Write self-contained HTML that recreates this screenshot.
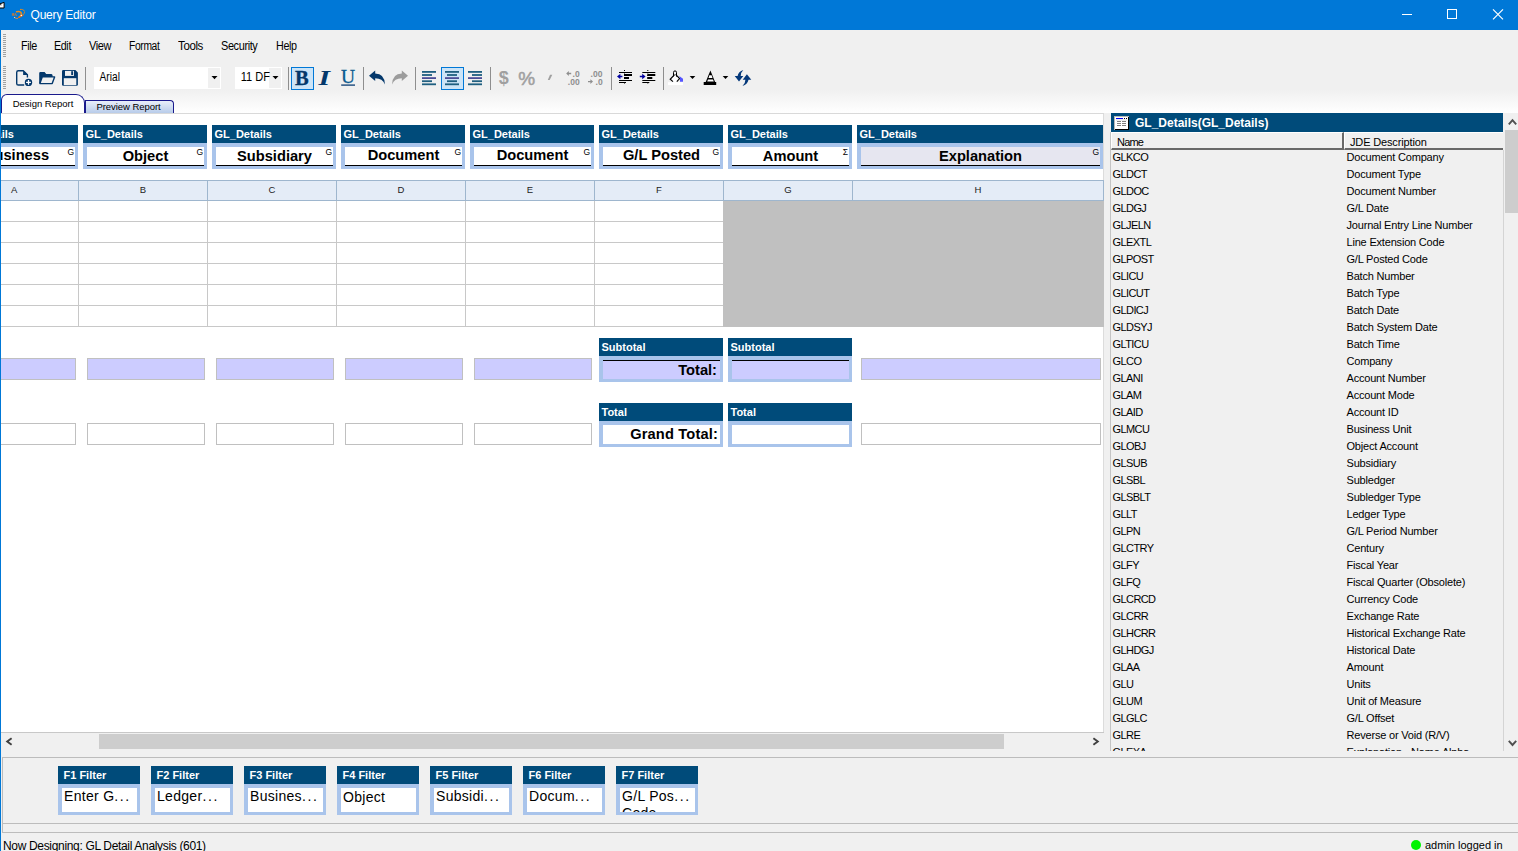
<!DOCTYPE html>
<html><head><meta charset="utf-8"><title>Query Editor</title>
<style>
*{box-sizing:border-box;margin:0;padding:0}
html,body{width:1518px;height:851px;overflow:hidden;background:#f0f0f0;font-family:"Liberation Sans",sans-serif;font-size:12px;color:#000}
.a{position:absolute}
#title{left:0;top:0;width:1518px;height:30px;background:#0078d7;color:#fff}
#title .t{left:30.5px;top:8px;font-size:12px;letter-spacing:-0.2px}
.menu{top:39px;font-size:12px}
.blk{background:#004b7a}
.blk .hd{left:2.5px;top:3px;color:#fff;font-weight:bold;font-size:11px;white-space:nowrap}
.blk .bx{left:0;top:18px;right:0;bottom:0;background:#a9c4eb}
.blk .in{left:4px;top:4px;right:3px;bottom:3px;background:#fff;border-bottom:1px solid #000;overflow:hidden}
.blk .lb{left:0;right:0;top:0px;text-align:center;font-weight:bold;font-size:14.67px;line-height:18px;white-space:nowrap}
.blk .g{right:1px;top:0px;font-size:8.5px}
.lav{background:#ccccff;border:1px solid #c0c0c0;height:22px;top:358px}
.wht{background:#fff;border:1px solid #c0c0c0;height:22px;top:423px}
.ch{top:180px;height:21px;background:#e4ecf7;border:1px solid #9eb6ce;border-left:none;font-size:9.5px;text-align:center;line-height:17px;color:#222}
.lst{font-size:11px;white-space:nowrap;line-height:17px;letter-spacing:-0.58px}
.lsd{letter-spacing:-0.19px}
.fl{background:#004b7a;width:82px;height:49px;top:766px}
.fl .hd{left:5.5px;top:3px;color:#fff;font-weight:bold;font-size:11px;white-space:nowrap}
.fl .bx{left:0;top:18px;right:0;bottom:0;background:#a9c4eb}
.fl .in{left:4px;top:4px;right:3px;bottom:3px;background:#fff;overflow:hidden;font-size:14px;line-height:17px;padding-left:2px;white-space:nowrap;letter-spacing:0.3px}
</style></head><body>

<div class="a" id="title"><div class="a t">Query Editor</div>
<svg class="a" style="left:10px;top:7px" width="18" height="14" viewBox="10 7 18 14"><g fill="none" stroke-linecap="round"><path d="M16.6 11.8Q20.8 11 21.4 13.6Q21.6 15.8 19 17.3" stroke="#f58a10" stroke-width="1.5"/><path d="M18.8 17.4L22.8 15.2" stroke="#f06a0c" stroke-width="1.3"/><path d="M20.4 9.4Q24.2 9.2 24.6 11.8Q24.4 13.4 23.2 14.6" stroke="#ee8a14" stroke-width="1" stroke-dasharray="1.6 1"/><path d="M14.6 17.6Q16 18.8 17.6 18.5" stroke="#f08a2a" stroke-width="0.9"/><path d="M12.4 15.4V13.6M13.6 15.4V13.4M14.8 15.4L15.4 13.4L16.4 15.6" stroke="#e8781a" stroke-width="0.8"/></g><circle cx="21.3" cy="15.5" r="0.7" fill="#fff"/><circle cx="14.5" cy="17.5" r="0.55" fill="#ffd9b0"/></svg>
<svg class="a" style="left:1395px;top:0" width="123" height="30" viewBox="0 0 123 30"><g stroke="#fff" stroke-width="1" fill="none"><path d="M7 14.5h10"/><rect x="52.5" y="9.5" width="9" height="9"/><path d="M98 9.3l10 10M108 9.3l-10 10" stroke-width="1.15"/></g></svg>
</div>
<div class="a menu" style="left:21px;letter-spacing:-0.4px;transform-origin:0 0;transform:scaleX(0.896)">File</div>
<div class="a menu" style="left:54px;letter-spacing:-0.4px;transform-origin:0 0;transform:scaleX(0.891)">Edit</div>
<div class="a menu" style="left:89px;letter-spacing:-0.4px;transform-origin:0 0;transform:scaleX(0.918)">View</div>
<div class="a menu" style="left:129.3px;letter-spacing:-0.4px;transform-origin:0 0;transform:scaleX(0.856)">Format</div>
<div class="a menu" style="left:178.3px;letter-spacing:-0.4px;transform-origin:0 0;transform:scaleX(0.961)">Tools</div>
<div class="a menu" style="left:221px;letter-spacing:-0.4px;transform-origin:0 0;transform:scaleX(0.908)">Security</div>
<div class="a menu" style="left:276px;letter-spacing:-0.4px;transform-origin:0 0;transform:scaleX(0.897)">Help</div>
<div class="a" style="left:3px;top:34px;width:3px;height:24px;background:repeating-linear-gradient(#a0a0a0 0 1px,transparent 1px 2px)"></div>
<div class="a" style="left:3px;top:66px;width:3px;height:24px;background:repeating-linear-gradient(#a0a0a0 0 1px,transparent 1px 2px)"></div>
<svg class="a" style="left:0;top:62px" width="770" height="34" viewBox="0 62 770 34" font-family="Liberation Sans, sans-serif">
<path d="M24.2 85H18.3Q16.7 85 16.7 83.4V72.4Q16.7 70.8 18.3 70.8H23.3L27.4 74.7V77.6" fill="none" stroke="#04386b" stroke-width="1.4" stroke-linejoin="round"/>
<path d="M23.1 70.4L27.9 74.9H23.1z" fill="#04386b"/>
<circle cx="28.5" cy="82.4" r="3.7" fill="#04386b"/><path d="M28.5 80v4.8M26.1 82.4h4.8" stroke="#fff" stroke-width="1.3"/>
<path d="M39.2 73.2Q39.2 72 40.4 72H44.6L46.2 74H51Q52.4 74 52.6 75.4V77.2H42.4L40.4 83.2H39.2z" fill="#04386b"/>
<path d="M42.2 76.9H54.6L52.2 83.6H39.9z" fill="#f0f0f0" stroke="#04386b" stroke-width="1.4" stroke-linejoin="round"/>
<path d="M62 71.3Q62 70.1 63.2 70.1H75.4L77.9 72.6V84.6Q77.9 85.8 76.7 85.8H63.2Q62 85.8 62 84.6z" fill="#04386b"/>
<rect x="65" y="70.9" width="9" height="5" fill="#f0f0f0"/><rect x="71.2" y="71.2" width="1.9" height="3.8" fill="#04386b"/>
<rect x="63.8" y="78.2" width="12.5" height="6.9" fill="#f0f0f0"/>
<g stroke="#8e8e8e" stroke-width="1"><path d="M85.5 67v23M288.5 67v23M363.5 67v23M415.5 67v23M490.5 67v23M611.5 67v23M663.5 67v23"/></g>
<rect x="94" y="67" width="127" height="22" fill="#fff"/><rect x="208" y="68" width="12" height="20" fill="#f0f0f0"/>
<path d="M211.5 76h6l-3 3.2z" fill="#000"/>
<text x="99.6" y="81.3" font-size="12" textLength="20.3" lengthAdjust="spacingAndGlyphs" fill="#000">Arial</text>
<rect x="235" y="67" width="47" height="22" fill="#fff"/><rect x="269" y="68" width="12" height="20" fill="#f0f0f0"/>
<path d="M272.5 76h6l-3 3.2z" fill="#000"/>
<text x="240.8" y="81.3" font-size="12" textLength="29.2" lengthAdjust="spacingAndGlyphs" fill="#000">11 DF</text>
<rect x="291.5" y="67.5" width="22" height="22" fill="#cce4f7" stroke="#0078d7" stroke-width="1"/>
<text x="295" y="85" font-family="Liberation Serif, serif" font-weight="bold" font-size="20.5" fill="#04386b" stroke="#04386b" stroke-width="0.3">B</text>
<text transform="translate(318.6 85) scale(1.45 1)" font-family="Liberation Serif, serif" font-weight="bold" font-style="italic" font-size="20.5" fill="#04386b">I</text>
<text x="340.9" y="83.2" font-family="Liberation Serif, serif" font-size="19.5" fill="#0b5a8f" stroke="#0b5a8f" stroke-width="0.3">U</text>
<rect x="341.2" y="84.4" width="13.8" height="1.4" fill="#1c4a7c"/>
<path d="M369 75.7L375.2 70.6V73.6Q384.6 73.6 384.9 84.6Q382.6 78.2 375.2 78.2V81z" fill="#04386b"/>
<path d="M408 75.7L401.8 70.6V73.6Q392.4 73.6 392.1 84.6Q394.4 78.2 401.8 78.2V81z" fill="#9c9c9c"/>
<g fill="#1f5f80"><rect x="422" y="71" width="14" height="1.8"/><rect x="422" y="74.1" width="10" height="1.8"/><rect x="422" y="77.2" width="14" height="1.8" fill="#4b4d96"/><rect x="422" y="80.3" width="10" height="1.8"/><rect x="422" y="83.4" width="14" height="1.8"/></g>
<rect x="441.5" y="67.5" width="22" height="22" fill="#cce4f7" stroke="#0078d7" stroke-width="1"/>
<g fill="#1f5f80"><rect x="445" y="71" width="14" height="1.8"/><rect x="447" y="74.1" width="10" height="1.8"/><rect x="445" y="77.2" width="14" height="1.8" fill="#4b4d96"/><rect x="447" y="80.3" width="10" height="1.8"/><rect x="445" y="83.4" width="14" height="1.8"/></g>
<g fill="#1f5f80"><rect x="468" y="71" width="14" height="1.8"/><rect x="472" y="74.1" width="10" height="1.8"/><rect x="468" y="77.2" width="14" height="1.8" fill="#4b4d96"/><rect x="472" y="80.3" width="10" height="1.8"/><rect x="468" y="83.4" width="14" height="1.8"/></g>
<text x="498.8" y="84.3" font-weight="bold" font-size="18" fill="#a0a0a0">$</text>
<text x="518.3" y="84.8" font-size="19" fill="#a0a0a0" stroke="#a0a0a0" stroke-width="0.5">%</text>
<path d="M550 74.8h2.3l-2.6 5.2h-1.9z" fill="#a0a0a0"/>
<g fill="#8e8e8e" font-size="8.5" font-weight="bold"><text x="572.6" y="77">.0</text><text x="567.8" y="84.6">.00</text><text x="590.6" y="77">.00</text><text x="595.6" y="84.6">.0</text></g>
<path d="M566.2 73.5l2.6-2.4v1.7h2.4v1.4h-2.4v1.7z" fill="#8e8e8e"/>
<path d="M593 81.6l-2.6-2.4v1.7h-2.4v1.4h2.4v1.7z" fill="#8e8e8e"/>
<g id="od"><path d="M624.5 70v15" stroke="#000" stroke-width="1" stroke-dasharray="1 1.5"/><g fill="#000"><rect x="619" y="72" width="13" height="1"/><rect x="624" y="74" width="8" height="2"/><rect x="624" y="77" width="5" height="2"/><rect x="619" y="80" width="13" height="1"/><rect x="619" y="82" width="7" height="1"/></g></g>
<path d="M617 76.5l3.4-2.8v2h2v1.6h-2v2z" fill="#0000a0"/>
<g transform="translate(23.3 0)"><path d="M624.5 70v15" stroke="#000" stroke-width="1" stroke-dasharray="1 1.5"/><g fill="#000"><rect x="619" y="72" width="13" height="1"/><rect x="624" y="74" width="8" height="2"/><rect x="624" y="77" width="5" height="2"/><rect x="619" y="80" width="13" height="1"/><rect x="619" y="82" width="7" height="1"/></g></g>
<path d="M645.6 76.5l-3.4-2.8v2h-2.4v1.6h2.4v2z" fill="#0000a0"/>
<rect x="668" y="82.2" width="15" height="2.9" fill="#fff"/>
<path d="M674.6 74.6L670.2 79.3L673 82.2H676.8L679.6 78.6L675.6 74.4z" fill="#fff"/><path d="M674.6 74.6L670.2 79.3L673 81.6M676.8 81.6L679.6 78.6L675.6 74.4" fill="none" stroke="#000" stroke-width="1.15"/>
<path d="M673.5 76.4V72.4Q673.5 70.9 675 70.9Q676.5 70.9 676.5 72.4V76.6" fill="none" stroke="#000" stroke-width="1"/>
<path d="M679.3 76L683 78.7V81.7H680V78.4z" fill="#5555ff"/>
<path d="M689.7 76h5.6l-2.8 3.1z" fill="#000"/>
<path d="M710.4 70.4L715.2 82.2H705.6z" fill="#000"/>
<path d="M709.4 75.2h2.2l0.9 2.7h-4z" fill="#fff"/>
<path d="M708 79.5h5l0.8 2.1h-6.6z" fill="#fff"/>
<rect x="703.7" y="82" width="12.5" height="3" fill="#000"/>
<path d="M722.7 76h5.6l-2.8 3.1z" fill="#000"/>
<path d="M743.3 69.9Q738.4 71.4 737.6 76.1L734.7 76.1L739 81.4L743.3 76.1L740.7 76.1Q740.5 72.6 743.3 69.9Z" fill="#04387a"/>
<path d="M742.5 85.9Q747.4 84.4 748.5 79.7L751.3 79.7L746.9 74.3L742.7 79.7L745.4 79.7Q745.5 83.2 742.5 85.9Z" fill="#04387a"/>
</svg>

<div class="a" style="left:1px;top:90px;width:1517px;height:23px;background:linear-gradient(#f0f0f0,#ffffff)"></div>
<div class="a" style="left:1px;top:113px;width:1103px;height:1px;background:#d9d9d9"></div>
<div class="a" style="left:85px;top:100px;width:89px;height:13px;background:linear-gradient(#e9eff9,#b8ccea);border:1px solid #1a1a8c;border-bottom:none;border-radius:0 4px 0 0;font-size:9.5px;text-align:center;line-height:11px;letter-spacing:-0.05px;padding-right:2px">Preview Report</div>
<div class="a" style="left:1px;top:94px;width:84px;height:19px;background:#fff;border:1px solid #1a1a8c;border-bottom:none;border-radius:6px 9px 0 0;font-size:9.5px;text-align:center;line-height:18px;letter-spacing:0px">Design Report</div>
<div class="a" style="left:1px;top:114px;width:1103px;height:619px;background:#fff"></div>
<div class="a" style="left:1103px;top:114px;width:1px;height:619px;background:#dcdcdc"></div>
<div class="a blk" style="left:-46px;top:125px;width:124px;height:44px"><div class="a hd">GL_Details</div><div class="a bx"><div class="a in" style="background:#fff"><div class="a lb" style="top:-1px">Business</div><div class="a g">G</div></div></div></div>
<div class="a blk" style="left:83px;top:125px;width:124px;height:44px"><div class="a hd">GL_Details</div><div class="a bx"><div class="a in" style="background:#fff"><div class="a lb" style="top:0px">Object</div><div class="a g">G</div></div></div></div>
<div class="a blk" style="left:212px;top:125px;width:124px;height:44px"><div class="a hd">GL_Details</div><div class="a bx"><div class="a in" style="background:#fff"><div class="a lb" style="top:0px">Subsidiary</div><div class="a g">G</div></div></div></div>
<div class="a blk" style="left:341px;top:125px;width:124px;height:44px"><div class="a hd">GL_Details</div><div class="a bx"><div class="a in" style="background:#fff"><div class="a lb" style="top:-1px">Document</div><div class="a g">G</div></div></div></div>
<div class="a blk" style="left:470px;top:125px;width:124px;height:44px"><div class="a hd">GL_Details</div><div class="a bx"><div class="a in" style="background:#fff"><div class="a lb" style="top:-1px">Document</div><div class="a g">G</div></div></div></div>
<div class="a blk" style="left:599px;top:125px;width:124px;height:44px"><div class="a hd">GL_Details</div><div class="a bx"><div class="a in" style="background:#fff"><div class="a lb" style="top:-1px">G/L Posted</div><div class="a g">G</div></div></div></div>
<div class="a blk" style="left:728px;top:125px;width:124px;height:44px"><div class="a hd">GL_Details</div><div class="a bx"><div class="a in" style="background:#fff"><div class="a lb" style="top:0px">Amount</div><div class="a g">Σ</div></div></div></div>
<div class="a blk" style="left:857px;top:125px;width:246px;height:44px"><div class="a hd">GL_Details</div><div class="a bx"><div class="a in" style="background:#e6e6f0"><div class="a lb" style="top:0px">Explanation</div><div class="a g">G</div></div></div></div>
<div class="a ch" style="left:1px;width:78px;text-align:left;padding-left:10px">A</div>
<div class="a ch" style="left:79px;width:129px">B</div>
<div class="a ch" style="left:208px;width:129px">C</div>
<div class="a ch" style="left:337px;width:129px">D</div>
<div class="a ch" style="left:466px;width:129px">E</div>
<div class="a ch" style="left:595px;width:129px">F</div>
<div class="a ch" style="left:724px;width:129px">G</div>
<div class="a ch" style="left:853px;width:251px">H</div>
<div class="a" style="left:1px;top:221px;width:723px;height:1px;background:#c8c8c8"></div>
<div class="a" style="left:1px;top:242px;width:723px;height:1px;background:#c8c8c8"></div>
<div class="a" style="left:1px;top:263px;width:723px;height:1px;background:#c8c8c8"></div>
<div class="a" style="left:1px;top:284px;width:723px;height:1px;background:#c8c8c8"></div>
<div class="a" style="left:1px;top:305px;width:723px;height:1px;background:#c8c8c8"></div>
<div class="a" style="left:1px;top:326px;width:723px;height:1px;background:#c8c8c8"></div>
<div class="a" style="left:78px;top:201px;width:1px;height:126px;background:#c8c8c8"></div>
<div class="a" style="left:207px;top:201px;width:1px;height:126px;background:#c8c8c8"></div>
<div class="a" style="left:336px;top:201px;width:1px;height:126px;background:#c8c8c8"></div>
<div class="a" style="left:465px;top:201px;width:1px;height:126px;background:#c8c8c8"></div>
<div class="a" style="left:594px;top:201px;width:1px;height:126px;background:#c8c8c8"></div>
<div class="a" style="left:723px;top:201px;width:381px;height:126px;background:#c0c0c0"></div>
<div class="a lav" style="left:-42px;width:118px"></div>
<div class="a wht" style="left:-42px;width:118px"></div>
<div class="a lav" style="left:87px;width:118px"></div>
<div class="a wht" style="left:87px;width:118px"></div>
<div class="a lav" style="left:216px;width:118px"></div>
<div class="a wht" style="left:216px;width:118px"></div>
<div class="a lav" style="left:345px;width:118px"></div>
<div class="a wht" style="left:345px;width:118px"></div>
<div class="a lav" style="left:474px;width:118px"></div>
<div class="a wht" style="left:474px;width:118px"></div>
<div class="a lav" style="left:861px;width:240px"></div>
<div class="a wht" style="left:861px;width:240px"></div>
<div class="a blk" style="left:599px;top:338px;width:124px;height:44px"><div class="a hd">Subtotal</div><div class="a bx"><div class="a" style="left:4px;top:4px;right:3px;bottom:3px;background:#ccccff;border-top:1px solid #000;"><div class="a" style="right:3px;top:0px;letter-spacing:0px;font-weight:bold;font-size:14.67px;line-height:18px;white-space:nowrap">Total:</div></div></div></div>
<div class="a blk" style="left:728px;top:338px;width:124px;height:44px"><div class="a hd">Subtotal</div><div class="a bx"><div class="a" style="left:4px;top:4px;right:3px;bottom:3px;background:#ccccff;border-top:1px solid #000;"><div class="a" style="right:3px;top:0px;letter-spacing:0px;font-weight:bold;font-size:14.67px;line-height:18px;white-space:nowrap"></div></div></div></div>
<div class="a blk" style="left:599px;top:403px;width:124px;height:44px"><div class="a hd">Total</div><div class="a bx"><div class="a" style="left:4px;top:4px;right:3px;bottom:3px;background:#fff;"><div class="a" style="right:2px;top:0px;letter-spacing:0.15px;font-weight:bold;font-size:14.67px;line-height:18px;white-space:nowrap">Grand Total:</div></div></div></div>
<div class="a blk" style="left:728px;top:403px;width:124px;height:44px"><div class="a hd">Total</div><div class="a bx"><div class="a" style="left:4px;top:4px;right:3px;bottom:3px;background:#fff;"><div class="a" style="right:2px;top:0px;letter-spacing:0.15px;font-weight:bold;font-size:14.67px;line-height:18px;white-space:nowrap"></div></div></div></div>
<div class="a" style="left:1px;top:732px;width:1103px;height:1px;background:#c8c8c8"></div>
<div class="a" style="left:1px;top:733px;width:1103px;height:17px;background:#f0f0f0"></div>
<div class="a" style="left:99px;top:734px;width:905px;height:15px;background:#cdcdcd"></div>
<svg class="a" style="left:5px;top:737px" width="8" height="9" viewBox="0 0 8 9"><path d="M6.6 1.2L2.2 4.5l4.4 3.3" fill="none" stroke="#404040" stroke-width="1.9"/></svg>
<svg class="a" style="left:1092px;top:737px" width="8" height="9" viewBox="0 0 8 9"><path d="M1.4 1.2L5.8 4.5l-4.4 3.3" fill="none" stroke="#404040" stroke-width="1.9"/></svg>
<div class="a" style="left:2px;top:757px;width:1516px;height:76px;border:1px solid #bcbcbc;border-right:none"></div>
<div class="a" style="left:2px;top:823px;width:1516px;height:1px;background:#bcbcbc"></div>
<div class="a fl" style="left:58px"><div class="a hd">F1 Filter</div><div class="a bx"><div class="a in" style="">Enter G<span style="letter-spacing:1.6px">...</span></div></div></div>
<div class="a fl" style="left:151px"><div class="a hd">F2 Filter</div><div class="a bx"><div class="a in" style="">Ledger<span style="letter-spacing:1.6px">...</span></div></div></div>
<div class="a fl" style="left:244px"><div class="a hd">F3 Filter</div><div class="a bx"><div class="a in" style="">Busines<span style="letter-spacing:1.6px">...</span></div></div></div>
<div class="a fl" style="left:337px"><div class="a hd">F4 Filter</div><div class="a bx"><div class="a in" style="padding-top:1px;">Object</div></div></div>
<div class="a fl" style="left:430px"><div class="a hd">F5 Filter</div><div class="a bx"><div class="a in" style="">Subsidi<span style="letter-spacing:1.6px">...</span></div></div></div>
<div class="a fl" style="left:523px"><div class="a hd">F6 Filter</div><div class="a bx"><div class="a in" style="">Docum<span style="letter-spacing:1.6px">...</span></div></div></div>
<div class="a fl" style="left:616px"><div class="a hd">F7 Filter</div><div class="a bx"><div class="a in" style="">G/L Pos<span style="letter-spacing:1.6px">...</span><br>Code</div></div></div>
<div class="a" style="left:3px;top:838.5px;font-size:12px;white-space:nowrap;letter-spacing:-0.33px">Now Designing: GL Detail Analysis (601)</div>
<div class="a" style="left:1411px;top:840px;width:10px;height:10px;border-radius:5px;background:#00f400"></div>
<div class="a" style="left:1425px;top:839px;font-size:11px;white-space:nowrap">admin logged in</div>
<div class="a" style="left:1111px;top:113px;width:392px;height:19px;background:#004b7a"></div>
<div class="a" style="left:1135px;top:117px;color:#fff;font-weight:bold;font-size:12px;line-height:13px;white-space:nowrap">GL_Details(GL_Details)</div>
<svg class="a" style="left:1114px;top:116px" width="15" height="14" viewBox="0 0 15 14"><rect width="15" height="14" fill="#b8b8b8"/><rect x="1" y="1" width="13" height="12" fill="#fff"/><rect x="14" y="1" width="1" height="13" fill="#000"/><rect x="1" y="13" width="14" height="1" fill="#000"/><rect x="2" y="2" width="7" height="1" fill="#0000ee"/><rect x="10" y="2" width="1" height="1" fill="#000"/><rect x="12" y="2" width="1" height="1" fill="#000"/><rect x="2" y="3.6" width="11" height="0.8" fill="#d8d8d8"/><g fill="#808080"><rect x="3" y="5" width="4" height="1"/><rect x="8" y="5" width="4" height="1"/><rect x="3" y="7" width="4" height="1"/><rect x="8" y="7" width="4" height="1"/><rect x="3" y="9" width="4" height="1"/><rect x="8" y="9" width="4" height="1"/></g></svg>
<div class="a" style="left:1111px;top:132px;width:233px;height:18px;border-bottom:2px solid #696969;border-right:2px solid #696969;border-top:1px solid #fff;border-left:1px solid #fff;background:#f0f0f0"></div>
<div class="a" style="left:1344px;top:132px;width:159px;height:18px;border-bottom:2px solid #696969;border-top:1px solid #fff;border-left:1px solid #fff;background:#f0f0f0"></div>
<div class="a lst" style="left:1117px;top:133.5px;font-size:11px;line-height:16px;letter-spacing:-0.8px">Name</div>
<div class="a lst" style="left:1350px;top:133.5px;font-size:11px;line-height:16px;letter-spacing:-0.15px">JDE Description</div>
<div class="a" style="left:1111px;top:150px;width:392px;height:601px;overflow:hidden">
<div class="a lst" style="left:1.5px;top:-1px">GLKCO</div><div class="a lst lsd" style="left:235.5px;top:-1px">Document Company</div>
<div class="a lst" style="left:1.5px;top:16px">GLDCT</div><div class="a lst lsd" style="left:235.5px;top:16px">Document Type</div>
<div class="a lst" style="left:1.5px;top:33px">GLDOC</div><div class="a lst lsd" style="left:235.5px;top:33px">Document Number</div>
<div class="a lst" style="left:1.5px;top:50px">GLDGJ</div><div class="a lst lsd" style="left:235.5px;top:50px">G/L Date</div>
<div class="a lst" style="left:1.5px;top:67px">GLJELN</div><div class="a lst lsd" style="left:235.5px;top:67px">Journal Entry Line Number</div>
<div class="a lst" style="left:1.5px;top:84px">GLEXTL</div><div class="a lst lsd" style="left:235.5px;top:84px">Line Extension Code</div>
<div class="a lst" style="left:1.5px;top:101px">GLPOST</div><div class="a lst lsd" style="left:235.5px;top:101px">G/L Posted Code</div>
<div class="a lst" style="left:1.5px;top:118px">GLICU</div><div class="a lst lsd" style="left:235.5px;top:118px">Batch Number</div>
<div class="a lst" style="left:1.5px;top:135px">GLICUT</div><div class="a lst lsd" style="left:235.5px;top:135px">Batch Type</div>
<div class="a lst" style="left:1.5px;top:152px">GLDICJ</div><div class="a lst lsd" style="left:235.5px;top:152px">Batch Date</div>
<div class="a lst" style="left:1.5px;top:169px">GLDSYJ</div><div class="a lst lsd" style="left:235.5px;top:169px">Batch System Date</div>
<div class="a lst" style="left:1.5px;top:186px">GLTICU</div><div class="a lst lsd" style="left:235.5px;top:186px">Batch Time</div>
<div class="a lst" style="left:1.5px;top:203px">GLCO</div><div class="a lst lsd" style="left:235.5px;top:203px">Company</div>
<div class="a lst" style="left:1.5px;top:220px">GLANI</div><div class="a lst lsd" style="left:235.5px;top:220px">Account Number</div>
<div class="a lst" style="left:1.5px;top:237px">GLAM</div><div class="a lst lsd" style="left:235.5px;top:237px">Account Mode</div>
<div class="a lst" style="left:1.5px;top:254px">GLAID</div><div class="a lst lsd" style="left:235.5px;top:254px">Account ID</div>
<div class="a lst" style="left:1.5px;top:271px">GLMCU</div><div class="a lst lsd" style="left:235.5px;top:271px">Business Unit</div>
<div class="a lst" style="left:1.5px;top:288px">GLOBJ</div><div class="a lst lsd" style="left:235.5px;top:288px">Object Account</div>
<div class="a lst" style="left:1.5px;top:305px">GLSUB</div><div class="a lst lsd" style="left:235.5px;top:305px">Subsidiary</div>
<div class="a lst" style="left:1.5px;top:322px">GLSBL</div><div class="a lst lsd" style="left:235.5px;top:322px">Subledger</div>
<div class="a lst" style="left:1.5px;top:339px">GLSBLT</div><div class="a lst lsd" style="left:235.5px;top:339px">Subledger Type</div>
<div class="a lst" style="left:1.5px;top:356px">GLLT</div><div class="a lst lsd" style="left:235.5px;top:356px">Ledger Type</div>
<div class="a lst" style="left:1.5px;top:373px">GLPN</div><div class="a lst lsd" style="left:235.5px;top:373px">G/L Period Number</div>
<div class="a lst" style="left:1.5px;top:390px">GLCTRY</div><div class="a lst lsd" style="left:235.5px;top:390px">Century</div>
<div class="a lst" style="left:1.5px;top:407px">GLFY</div><div class="a lst lsd" style="left:235.5px;top:407px">Fiscal Year</div>
<div class="a lst" style="left:1.5px;top:424px">GLFQ</div><div class="a lst lsd" style="left:235.5px;top:424px">Fiscal Quarter (Obsolete)</div>
<div class="a lst" style="left:1.5px;top:441px">GLCRCD</div><div class="a lst lsd" style="left:235.5px;top:441px">Currency Code</div>
<div class="a lst" style="left:1.5px;top:458px">GLCRR</div><div class="a lst lsd" style="left:235.5px;top:458px">Exchange Rate</div>
<div class="a lst" style="left:1.5px;top:475px">GLHCRR</div><div class="a lst lsd" style="left:235.5px;top:475px">Historical Exchange Rate</div>
<div class="a lst" style="left:1.5px;top:492px">GLHDGJ</div><div class="a lst lsd" style="left:235.5px;top:492px">Historical Date</div>
<div class="a lst" style="left:1.5px;top:509px">GLAA</div><div class="a lst lsd" style="left:235.5px;top:509px">Amount</div>
<div class="a lst" style="left:1.5px;top:526px">GLU</div><div class="a lst lsd" style="left:235.5px;top:526px">Units</div>
<div class="a lst" style="left:1.5px;top:543px">GLUM</div><div class="a lst lsd" style="left:235.5px;top:543px">Unit of Measure</div>
<div class="a lst" style="left:1.5px;top:560px">GLGLC</div><div class="a lst lsd" style="left:235.5px;top:560px">G/L Offset</div>
<div class="a lst" style="left:1.5px;top:577px">GLRE</div><div class="a lst lsd" style="left:235.5px;top:577px">Reverse or Void (R/V)</div>
<div class="a lst" style="left:1.5px;top:594px">GLEXA</div><div class="a lst lsd" style="left:235.5px;top:594px">Explanation - Name Alpha</div>
</div>
<div class="a" style="left:1503px;top:113px;width:15px;height:638px;background:#f0f0f0"></div>
<div class="a" style="left:1503px;top:150px;width:1px;height:601px;background:#d4d4d4"></div>
<div class="a" style="left:1505px;top:130px;width:13px;height:83px;background:#cdcdcd"></div>
<svg class="a" style="left:1507px;top:118px" width="11" height="8" viewBox="0 0 11 8"><path d="M1.8 6.4L5.5 2.2l3.7 4.2" fill="none" stroke="#505050" stroke-width="1.9"/></svg>
<svg class="a" style="left:1507px;top:739px" width="11" height="8" viewBox="0 0 11 8"><path d="M1.8 1.8L5.5 6l3.7-4.2" fill="none" stroke="#505050" stroke-width="1.9"/></svg>
<div class="a" style="left:1110px;top:132px;width:1px;height:619px;background:#c4c4c4"></div>
<svg class="a" style="left:0;top:0" width="6" height="10" viewBox="0 0 6 10"><path d="M-1 4.1L4.1 2.4L4.1 8L-1 8z" fill="#fff" stroke="#000" stroke-width="1"/><path d="M0 4.6L1.4 4.9" stroke="#000" stroke-width="0.9"/></svg>
<div class="a" style="left:0;top:30px;width:1px;height:821px;background:#0078d7;z-index:9"></div>
</body></html>
